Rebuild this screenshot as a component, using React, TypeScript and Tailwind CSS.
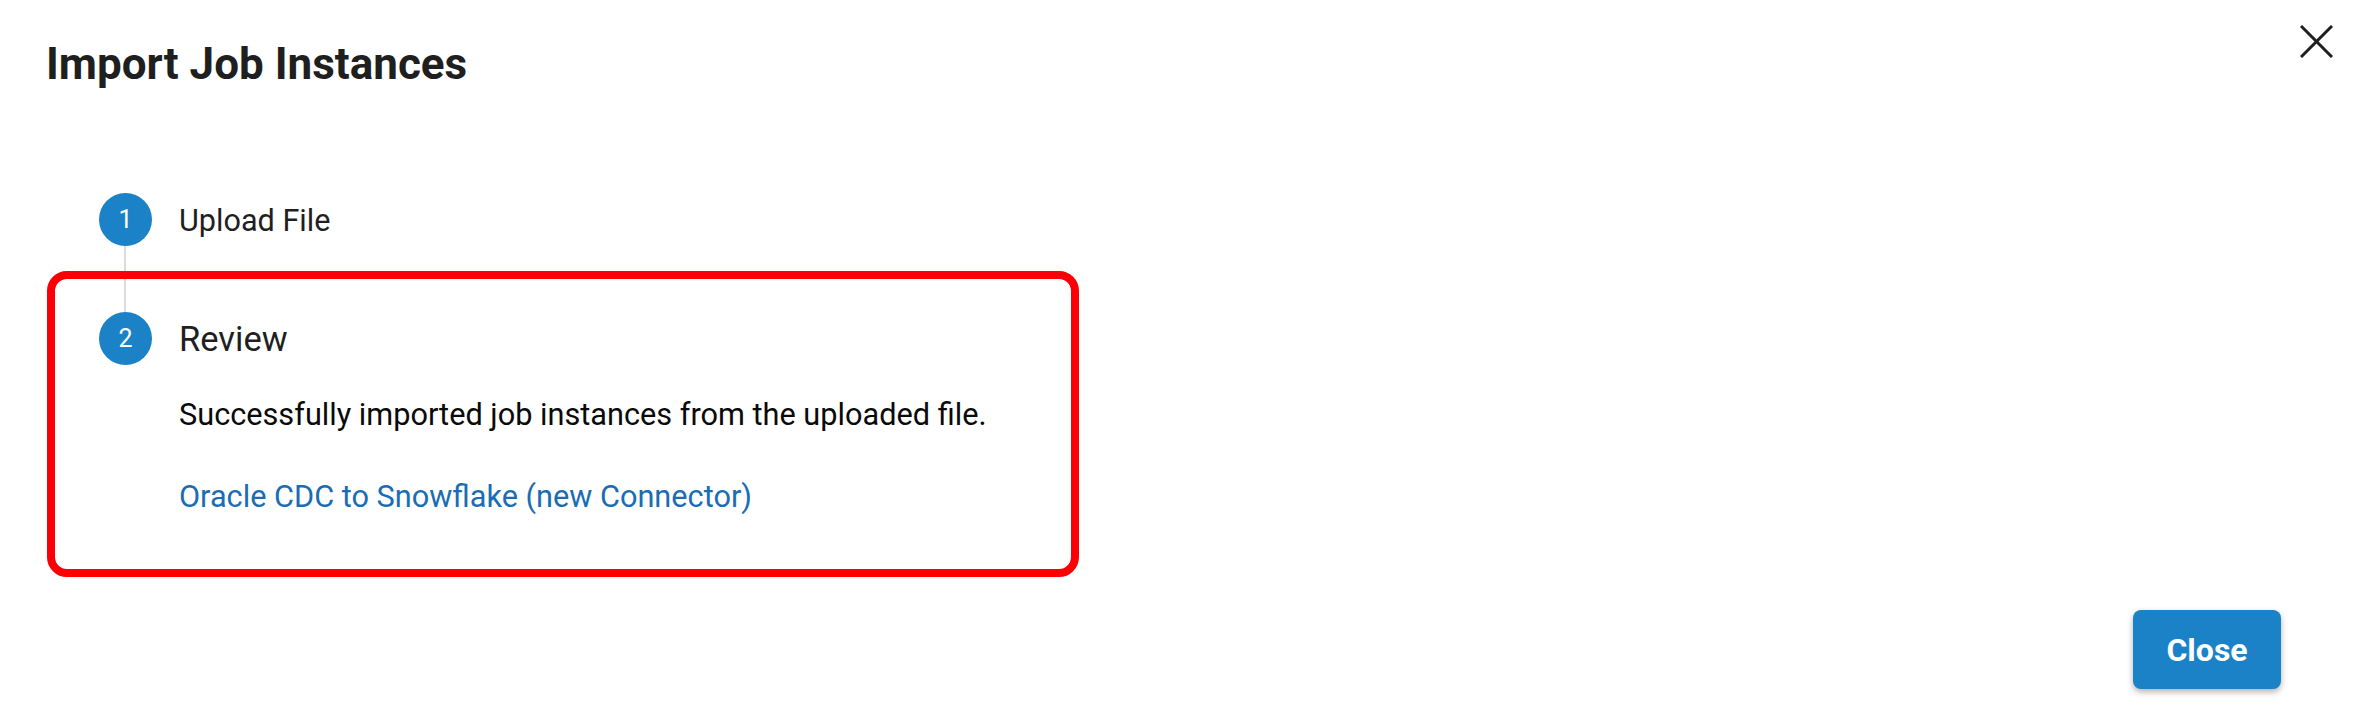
import React from 'react';

const font = { fontFamily: 'Roboto, "Noto Sans", sans-serif' };

function StepIcon({ n }: { n: number }) {
    return (
        <div className="w-[53px] h-[53px] shrink-0 rounded-full bg-[#1b82c8] flex items-center justify-center text-white text-[25px] leading-none">
            {n}
        </div>
    );
}

export default function App() {
    return (
        <div className="relative w-[2354px] h-[718px] bg-white flex flex-col text-[#1f1f1f]" style={font}>
            {/* Dialog header */}
            <div className="flex items-start justify-between pl-[46px] pr-[21px] pt-[25px]">
                <h1 className="mt-[12px] text-[44px] leading-[54px] font-bold">Import Job Instances</h1>
                <button aria-label="Close dialog" className="w-[33px] h-[33px] text-[#1f1f1f]">
                    <svg viewBox="0 0 33 33" width="33" height="33" fill="none" stroke="currentColor" strokeWidth="3">
                        <path d="M1 1 32 32M32 1 1 32" />
                    </svg>
                </button>
            </div>

            {/* Stepper */}
            <div className="pl-[99px] mt-[102px] flex flex-col">
                <div className="flex items-center gap-[27px]">
                    <StepIcon n={1} />
                    <span className="text-[30.6px] leading-[36px] pt-[2px]">Upload File</span>
                </div>
                <div className="ml-[25px] h-[66px] border-l-2 border-[#dcdcdc]" />
                <div className="flex items-center gap-[27px]">
                    <StepIcon n={2} />
                    <span className="text-[34.5px] leading-[40px]">Review</span>
                </div>
                <div className="pl-[80px] mt-[32px] flex flex-col">
                    <p className="text-[30.7px] leading-[36px] text-[#0a0a0a]">
                        Successfully imported job instances from the uploaded file.
                    </p>
                    <a href="#" className="mt-[46px] text-[30.7px] leading-[36px] text-[#1a6db3]">
                        Oracle CDC to Snowflake (new Connector)
                    </a>
                </div>
            </div>

            {/* Actions */}
            <div className="mt-auto flex justify-end pr-[73px] pb-[29px]">
                <button className="w-[148px] h-[79px] rounded-[8px] bg-[#1b82c8] text-white text-[32px] font-bold shadow-[0_3px_6px_rgba(0,0,0,0.3)]">
                    Close
                </button>
            </div>

            {/* Highlight annotation over the review step */}
            <div className="absolute left-[47px] top-[271px] w-[1032px] h-[306px] border-[8px] border-[#fc0006] rounded-[20px] pointer-events-none" />
        </div>
    );
}
